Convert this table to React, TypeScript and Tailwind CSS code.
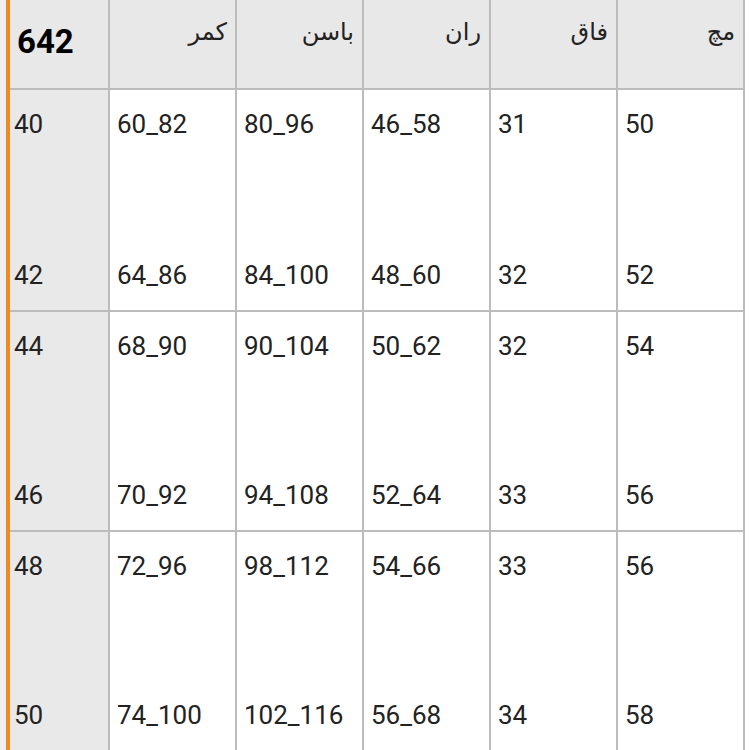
const headers = ['کمر', 'باسن', 'ران', 'فاق', 'مچ'];

const rows = [
  { sizes: ['40', '42'], cells: [['60_82', '64_86'], ['80_96', '84_100'], ['46_58', '48_60'], ['31', '32'], ['50', '52']] },
  { sizes: ['44', '46'], cells: [['68_90', '70_92'], ['90_104', '94_108'], ['50_62', '52_64'], ['32', '33'], ['54', '56']] },
  { sizes: ['48', '50'], cells: [['72_96', '74_100'], ['98_112', '102_116'], ['54_66', '56_68'], ['33', '34'], ['56', '58']] },
];

function Cell({ top, bottom, first }: { top: string; bottom: string; first?: boolean }) {
  return (
    <div
      className={`flex flex-col justify-between h-full pt-[19px] pb-[20px] border-r-2 border-b-2 border-[#bcbcbc] ${
        first ? 'bg-[#e9e9e9] pl-1' : 'bg-white pl-[7px]'
      }`}
    >
      <span className="leading-[30px]">{top}</span>
      <span className="leading-[30px]">{bottom}</span>
    </div>
  );
}

export default function App() {
  return (
    <div className="w-[750px] h-[750px] overflow-hidden bg-white flex text-[#222] font-['Roboto','DejaVu_Sans',sans-serif]">
      {/* left edge strip */}
      <div className="w-[6px] shrink-0 bg-[#efefef]" />
      <div className="w-[4px] shrink-0 bg-[#ef8a22]" />

      <div className="w-[735px] shrink-0">
        {/* header */}
        <div className="grid grid-cols-[100px_repeat(5,127px)] h-[90px] bg-[#e8e8e8]">
          <div className="flex items-center pl-[7px] pb-1 border-r-2 border-b-2 border-[#bcbcbc]">
            <span className="text-[33px] font-bold text-black">642</span>
          </div>
          {headers.map((h) => (
            <div
              key={h}
              dir="rtl"
              className="pr-2 pt-[16px] text-[24px] leading-[32px] border-r-2 border-b-2 border-[#bcbcbc]"
            >
              {h}
            </div>
          ))}
        </div>

        {/* body */}
        {rows.map((r, i) => (
          <div
            key={i}
            className={`grid grid-cols-[100px_repeat(5,127px)] text-[26px] ${i === 0 ? 'h-[222px]' : 'h-[220px]'}`}
          >
            <Cell top={r.sizes[0]} bottom={r.sizes[1]} first />
            {r.cells.map((c, j) => (
              <Cell key={j} top={c[0]} bottom={c[1]} />
            ))}
          </div>
        ))}
      </div>
    </div>
  );
}
